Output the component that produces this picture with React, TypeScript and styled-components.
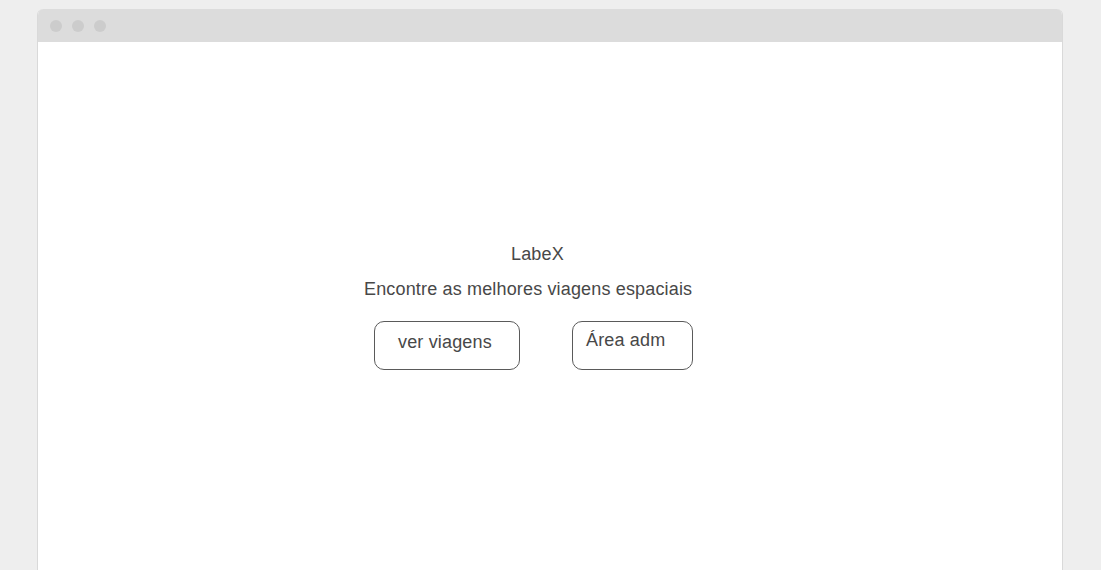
import React from "react";
import styled, { createGlobalStyle } from "styled-components";

const Global = createGlobalStyle`
  html, body {
    margin: 0;
    padding: 0;
    background: #eeeeee;
    overflow: hidden;
  }
  body {
    font-family: "Liberation Sans", Arial, sans-serif;
  }
`;

const Page = styled.div`
  display: flex;
  flex-direction: column;
  padding: 9px 38px 0 37px;
  height: 570px;
  box-sizing: border-box;
`;

const Window = styled.div`
  flex: 1;
  display: flex;
  flex-direction: column;
  border-left: 1px solid #d9d9d9;
  border-right: 1px solid #d9d9d9;
  border-radius: 6px 6px 0 0;
  overflow: hidden;
  background: #ffffff;
`;

const TitleBar = styled.div`
  height: 33px;
  background: #dcdcdc;
  display: flex;
  align-items: center;
  gap: 10px;
  padding-left: 12px;
  flex-shrink: 0;
`;

const Dot = styled.span`
  width: 12px;
  height: 12px;
  border-radius: 50%;
  background: #cccccc;
`;

const Content = styled.main`
  flex: 1;
  padding: 202px 0 0 326px;
`;

const Hero = styled.section`
  display: flex;
  flex-direction: column;
  align-items: flex-start;
  color: #484848;
  font-size: 18px;
  line-height: 21px;
  letter-spacing: 0.16px;
`;

const Title = styled.h1`
  margin: 0 0 0 147px;
  font-size: 18px;
  font-weight: normal;
  line-height: 21px;
`;

const Subtitle = styled.p`
  margin: 14px 0 0 0;
`;

const Actions = styled.div`
  display: flex;
  gap: 52px;
  margin: 21px 0 0 10px;
`;

const Button = styled.button<{ $width: number; $padLeft: number; $padTop: number }>`
  box-sizing: border-box;
  width: ${(p) => p.$width}px;
  height: 49px;
  padding: ${(p) => p.$padTop}px 0 0 ${(p) => p.$padLeft}px;
  border: 1px solid #5a5a5a;
  border-radius: 10px;
  background: #ffffff;
  color: #484848;
  font-family: "Liberation Sans", Arial, sans-serif;
  font-size: 18px;
  line-height: 21px;
  letter-spacing: 0.16px;
  text-align: left;
  display: flex;
  align-items: flex-start;
  cursor: pointer;
`;

export default function App() {
  return (
    <>
      <Global />
      <Page>
        <Window>
          <TitleBar>
            <Dot />
            <Dot />
            <Dot />
          </TitleBar>
          <Content>
            <Hero>
              <Title>LabeX</Title>
              <Subtitle>Encontre as melhores viagens espaciais</Subtitle>
              <Actions>
                <Button $width={146} $padLeft={23} $padTop={10}>
                  ver viagens
                </Button>
                <Button $width={121} $padLeft={13} $padTop={8}>
                  Área adm
                </Button>
              </Actions>
            </Hero>
          </Content>
        </Window>
      </Page>
    </>
  );
}
